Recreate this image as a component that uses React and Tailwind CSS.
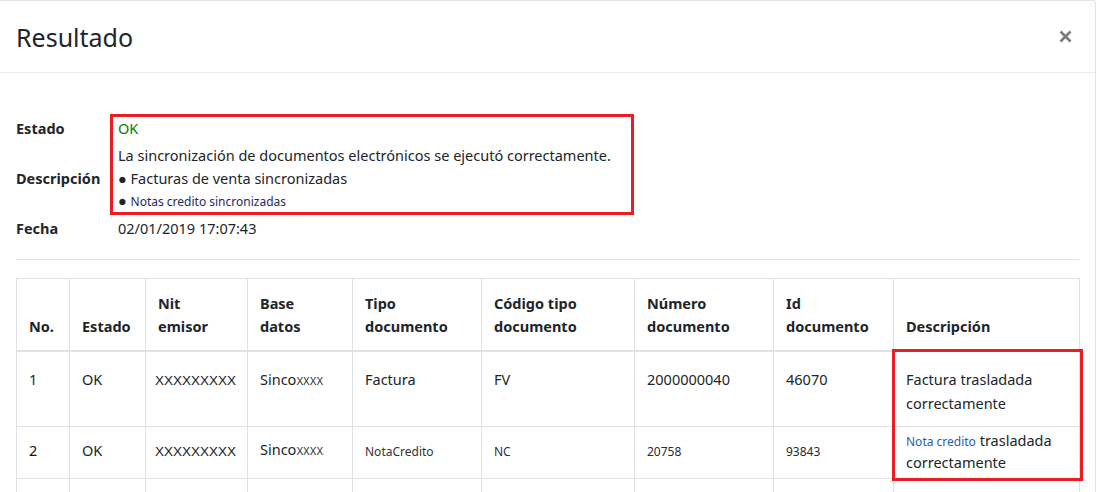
export default function App() {
  const th = "border border-[#dee2e6] border-b-2 px-3 pt-[13px] pb-[12px] align-bottom text-left font-bold leading-[23px]";
  const td1 = "border border-[#dee2e6] px-3 pt-[15px] pb-[11px] align-top leading-[24px]";
  const td2 = "border border-[#dee2e6] px-3 pt-[2px] pb-[6px] align-middle leading-[21px]";
  const td3 = "border border-[#dee2e6] px-3 h-[51px]";
  const xs = "font-['Liberation_Sans',sans-serif] text-[13.5px] text-[#1a1a1a]";
  const sm = "text-[12px] leading-[21px]";
  return (
    <div className="w-[1096px] h-[492px] overflow-hidden bg-white border-t border-r border-[#e3e3e3] rounded-tr-[3px] font-['Noto_Sans',sans-serif] text-[14.5px] text-[#212529]">
      <div className="h-[72px] flex items-center justify-between px-4 border-b border-[#e9ecef]">
        <h5 className="text-[25px] leading-none pt-[2px]">Resultado</h5>
        <button className="mr-[3px] p-1">
          <svg width="13" height="13" viewBox="0 0 13 13">
            <path d="M1.5 1.5 L11.5 11.5 M11.5 1.5 L1.5 11.5" stroke="#7a7a7a" strokeWidth="2.6" strokeLinecap="butt" />
          </svg>
        </button>
      </div>
      <div className="px-4 pt-[41px]">
        <div className="flex">
          <div className="w-[94px] pt-[3px] font-bold">
            <div className="leading-[22px]">Estado</div>
            <div className="mt-[5px] h-[69px] flex items-center">Descripción</div>
          </div>
          <div className="w-[524px] border-[3px] border-[#ec1c24] pl-[5px]">
            <div className="leading-[22px] text-[#008000]">OK</div>
            <div className="mt-[5px] leading-[23px]">
              <div>La sincronización de documentos electrónicos se ejecutó correctamente.</div>
              <div>● Facturas de venta sincronizadas</div>
              <div className="leading-[21px]"><span>● </span><span className="text-[12px] text-[#1f2a5c]">Notas credito sincronizadas</span></div>
            </div>
          </div>
        </div>
        <div className="flex mt-[2px] leading-[23px]">
          <div className="w-[102px] font-bold">Fecha</div>
          <div>02/01/2019 17:07:43</div>
        </div>
        <div className="mt-[19px] border-t border-[#e5e5e5]"></div>
        <div className="relative mt-[18px]">
          <table className="w-[1063px] table-fixed border-collapse">
            <colgroup>
              <col className="w-[53px]" />
              <col className="w-[76px]" />
              <col className="w-[102px]" />
              <col className="w-[105px]" />
              <col className="w-[129px]" />
              <col className="w-[153px]" />
              <col className="w-[139px]" />
              <col className="w-[120px]" />
              <col className="w-[186px]" />
            </colgroup>
            <thead>
              <tr>
                <th className={th}>No.</th>
                <th className={th}>Estado</th>
                <th className={th}>Nit<br />emisor</th>
                <th className={th}>Base<br />datos</th>
                <th className={th}>Tipo<br />documento</th>
                <th className={th}>Código tipo<br />documento</th>
                <th className={th}>Número<br />documento</th>
                <th className={th}>Id<br />documento</th>
                <th className={th}>Descripción</th>
              </tr>
            </thead>
            <tbody>
              <tr>
                <td className={td1}>1</td>
                <td className={td1}>OK</td>
                <td className={td1 + " !pl-[9px]"}><span className={xs}>XXXXXXXXX</span></td>
                <td className={td1}>Sinco<span className="font-['Liberation_Sans',sans-serif] text-[10px]">XXXX</span></td>
                <td className={td1}>Factura</td>
                <td className={td1}>FV</td>
                <td className={td1}>2000000040</td>
                <td className={td1}>46070</td>
                <td className={td1}>Factura trasladada correctamente</td>
              </tr>
              <tr>
                <td className={td2}><span className="text-[#111]">2</span></td>
                <td className={td2}>OK</td>
                <td className={td2 + " !pl-[9px]"}><span className={xs}>XXXXXXXXX</span></td>
                <td className={td2}>Sinco<span className="font-['Liberation_Sans',sans-serif] text-[10px]">XXXX</span></td>
                <td className={td2}><span className={sm + " text-[#3a2f2f]"}>NotaCredito</span></td>
                <td className={td2}><span className={sm + " text-[#2a2f4a]"}>NC</span></td>
                <td className={td2}><span className={sm + " text-[#2a2a2a]"}>20758</span></td>
                <td className={td2}><span className={sm + " text-[#2a2a2a]"}>93843</span></td>
                <td className={td2 + " !align-top !pt-[3px] !pb-[5px]"}><span className="text-[12px] text-[#1f5fa8]">Nota credito</span> trasladada correctamente</td>
              </tr>
              <tr>
                <td className={td3}></td>
                <td className={td3}></td>
                <td className={td3}></td>
                <td className={td3}></td>
                <td className={td3}></td>
                <td className={td3}></td>
                <td className={td3}></td>
                <td className={td3}></td>
                <td className={td3}></td>
              </tr>
            </tbody>
          </table>
          <div className="absolute left-[876px] top-[71px] w-[191px] h-[132px] border-[3px] border-[#ec1c24] pointer-events-none"></div>
        </div>
      </div>
    </div>
  );
}
